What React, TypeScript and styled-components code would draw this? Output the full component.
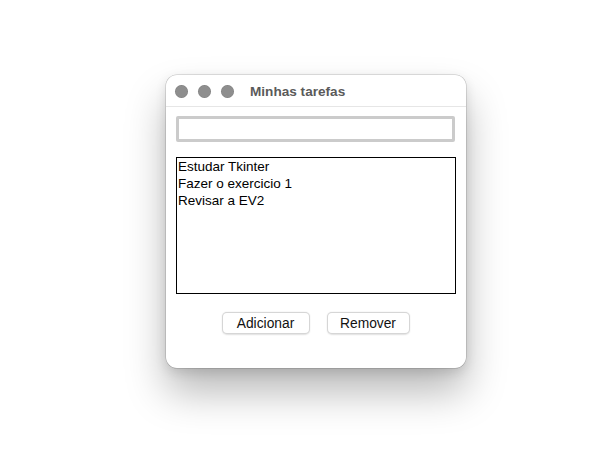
import * as React from "react";
import styled, { createGlobalStyle } from "styled-components";

const GlobalStyle = createGlobalStyle`
  html, body {
    margin: 0;
    padding: 0;
    background: #ffffff;
    font-family: "Liberation Sans", Arial, sans-serif;
  }
`;

const tasks = ["Estudar Tkinter", "Fazer o exercicio 1", "Revisar a EV2"];

const App = () => {
  const [value, setValue] = React.useState("");

  return (
    <Page>
      <GlobalStyle />
      <Window>
        <TitleBar>
          <Lights>
            <Light />
            <Light />
            <Light />
          </Lights>
          <Title>Minhas tarefas</Title>
        </TitleBar>
        <Body>
          <Entry value={value} onChange={(e) => setValue(e.target.value)} />
          <List>
            {tasks.map((t) => (
              <Item key={t}>{t}</Item>
            ))}
          </List>
          <Buttons>
            <Button $w={88}>Adicionar</Button>
            <Button $w={83}>Remover</Button>
          </Buttons>
        </Body>
      </Window>
    </Page>
  );
};
export default App;

const Page = styled.div`
  width: 612px;
  height: 455px;
  box-sizing: border-box;
  padding: 75px 0 0 166px;
  overflow: hidden;
`;

const Window = styled.div`
  width: 300px;
  height: 293px;
  background: #ffffff;
  border-radius: 11px;
  box-shadow: 0 0 0 0.5px rgba(0, 0, 0, 0.22), 0 24px 40px rgba(0, 0, 0, 0.28),
    0 4px 12px rgba(0, 0, 0, 0.12);
  display: flex;
  flex-direction: column;
  overflow: hidden;
`;

const TitleBar = styled.div`
  height: 32px;
  flex-shrink: 0;
  display: flex;
  align-items: center;
  padding: 1px 0 0 9px;
  box-sizing: border-box;
  border-bottom: 1px solid #e6e6e6;
`;

const Lights = styled.div`
  display: flex;
  gap: 10px;
`;

const Light = styled.span`
  width: 13px;
  height: 13px;
  border-radius: 50%;
  background: #8e8e8e;
  box-shadow: inset 0 0 0 0.5px rgba(0, 0, 0, 0.15);
`;

const Title = styled.div`
  margin-left: 16px;
  font-size: 13.6px;
  font-weight: bold;
  color: #5a5a5a;
`;

const Body = styled.div`
  display: flex;
  flex-direction: column;
  padding: 9px 11px 0 10px;
`;

const Entry = styled.input`
  height: 26px;
  box-sizing: border-box;
  border: 3px solid #cbcbcb;
  border-radius: 2px;
  outline: none;
  padding: 0 4px;
  font: 13px "Liberation Sans", Arial, sans-serif;
  background: #fff;
`;

const List = styled.div`
  margin-top: 15px;
  height: 137px;
  box-sizing: border-box;
  border: 1px solid #000;
  padding: 0 1px;
  width: 280px;
`;

const Item = styled.div`
  font-size: 13.5px;
  line-height: 17px;
  color: #000;
`;

const Buttons = styled.div`
  display: flex;
  justify-content: center;
  gap: 17px;
  margin-top: 18px;
`;

const Button = styled.button<{ $w: number }>`
  width: ${(p) => p.$w}px;
  height: 22px;
  border: 0.5px solid rgba(0, 0, 0, 0.16);
  border-radius: 5px;
  background: #fff;
  box-shadow: 0 0.5px 1.5px rgba(0, 0, 0, 0.12);
  font: 13.8px "Liberation Sans", Arial, sans-serif;
  color: #111;
  padding: 0;
`;
